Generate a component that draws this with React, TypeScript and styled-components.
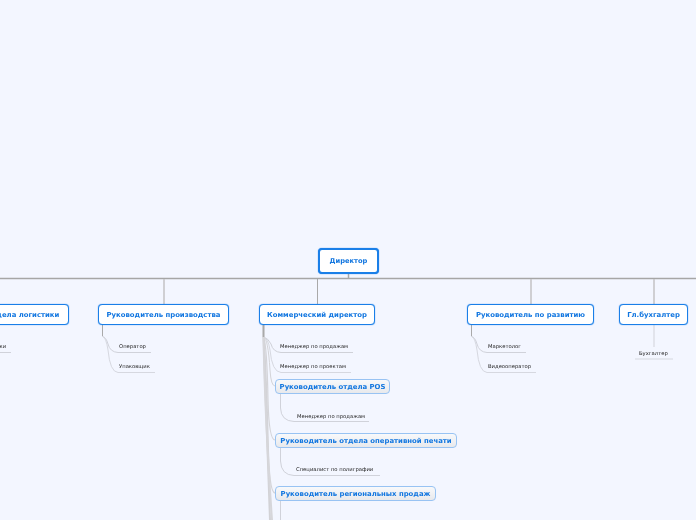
import React from 'react';
import styled, { createGlobalStyle } from 'styled-components';

const GlobalStyle = createGlobalStyle`
  html, body {
    margin: 0;
    padding: 0;
    background: #f3f6ff;
    overflow: hidden;
  }
`;

const Canvas = styled.div`
  position: relative;
  width: 696px;
  height: 520px;
  overflow: hidden;
  background: #f3f6ff;
  font-family: 'DejaVu Sans', Verdana, sans-serif;
  text-rendering: geometricPrecision;
  filter: blur(0.25px);
`;

const Wires = styled.svg`
  position: absolute;
  inset: 0;
`;

const MainNode = styled.div<{ $x: number; $y: number; $w: number; $h: number; $root?: boolean }>`
  position: absolute;
  left: ${(p) => p.$x}px;
  top: ${(p) => p.$y}px;
  width: ${(p) => p.$w}px;
  height: ${(p) => p.$h}px;
  box-sizing: border-box;
  display: flex;
  align-items: center;
  justify-content: center;
  background: #fff;
  border: ${(p) => (p.$root ? '2px' : '1px')} solid #1a7fe8;
  border-radius: 4px;
  box-shadow: 0 0 1px #1a7fe8;
  color: #1176e0;
  font-size: ${(p) => (p.$root ? 6.7 : 6.9)}px;
  font-weight: 700;
  white-space: nowrap;
`;

const SubNode = styled.div<{ $x: number; $y: number; $w: number }>`
  position: absolute;
  left: ${(p) => p.$x}px;
  top: ${(p) => p.$y}px;
  width: ${(p) => p.$w}px;
  height: 15px;
  box-sizing: border-box;
  display: flex;
  align-items: center;
  justify-content: center;
  background: linear-gradient(#f8f9fb, #e8e9ec);
  border: 1px solid #98c3f3;
  border-radius: 4px;
  color: #1176e0;
  font-size: 6.9px;
  font-weight: 700;
  white-space: nowrap;
`;

const Leaf = styled.div<{ $x: number; $y: number }>`
  position: absolute;
  left: ${(p) => p.$x}px;
  top: ${(p) => p.$y}px;
  color: #222;
  font-size: 5.25px;
  line-height: 8px;
  white-space: nowrap;
`;

const mainNodes = [
  { x: 318, y: 248, w: 61, h: 26, text: 'Директор', root: true },
  { x: -81, y: 304, w: 150, h: 21, text: 'Руководитель отдела логистики' },
  { x: 98, y: 304, w: 131, h: 21, text: 'Руководитель производства' },
  { x: 259, y: 304, w: 116, h: 21, text: 'Коммерческий директор' },
  { x: 467, y: 304, w: 127, h: 21, text: 'Руководитель по развитию' },
  { x: 619, y: 304, w: 69, h: 21, text: 'Гл.бухгалтер' },
];

const subNodes = [
  { x: 275, y: 379, w: 115, text: 'Руководитель отдела POS' },
  { x: 275, y: 433, w: 182, text: 'Руководитель отдела оперативной печати' },
  { x: 275, y: 486, w: 161, text: 'Руководитель региональных продаж' },
];

const leaves = [
  { x: -29, y: 342.5, text: 'Кладовщики' },
  { x: 119, y: 342.5, text: 'Оператор' },
  { x: 119, y: 362.5, text: 'Упаковщик' },
  { x: 280, y: 342.5, text: 'Менеджер по продажам' },
  { x: 280, y: 362.5, text: 'Менеджер по проектам' },
  { x: 297, y: 412.5, text: 'Менеджер по продажам' },
  { x: 296, y: 465.5, text: 'Специалист по полиграфии' },
  { x: 488, y: 342.5, text: 'Маркетолог' },
  { x: 488, y: 362.5, text: 'Видеооператор' },
  { x: 639, y: 349.5, text: 'Бухгалтер' },
];

// [path, stroke, width]
const wires: [string, string, number][] = [
  ['M0 278.5H696', '#a6a6a6', 1.5],
  ['M348.5 274V278', '#a9a9a9', 1.5],
  ['M317.5 279V304', '#a9a9a9', 1],
  ['M164 279V304', '#c6c6c8', 1.6],
  ['M531 279V304', '#c6c6c8', 1.6],
  ['M654 279V304', '#c6c6c8', 1.6],
  // Производство
  ['M102.5 325V336.5Q106 337 108 344Q110 352 118 352.5H151', '#d0d2da', 1],
  ['M102.5 325V336.5Q106 337 108 350Q110 372 118 372.5H155', '#d6d8e0', 1],
  ['M102.5 325V336', '#a9a9a9', 1],
  ['M-10 352.5H11', '#d0d2da', 1],
  // Коммерческий
  ['M263.5 325V337Q268 338 271 344Q273 352 281 352.5H353', '#cfd1d8', 1],
  ['M263.5 325V337Q268 338 270 350Q272 372 281 372.5H351', '#d6d8e0', 1],
  ['M263.5 325V337Q268 338 270 370Q271 386 275 386', '#d4d4d8', 1],
  ['M263.5 325V337Q267 345 268 400Q269 440 275 440', '#d4d4d8', 1.2],
  ['M263.5 325V337Q266 360 268 440Q269 493 275 493', '#d4d4d8', 1.5],
  ['M263.5 325V337Q266 400 270 520', '#d2d2d6', 2],
  ['M263.5 325V337Q265 420 272 520', '#d6d6da', 2],
  ['M263.5 325V337', '#a9a9a9', 1.5],
  ['M280.5 394V408Q281 421 294 421.5H369', '#d0d2da', 1],
  ['M280.5 448V461Q281 475 294 475.5H380', '#d0d2da', 1],
  ['M280.5 501V520', '#d0d2da', 1],
  // Развитие
  ['M471.5 325V336.5Q475 337 477 344Q479 352 487 352.5H526', '#d0d2da', 1],
  ['M471.5 325V336.5Q475 337 477 350Q479 372 487 372.5H536', '#d6d8e0', 1],
  ['M471.5 325V336', '#a9a9a9', 1],
  // Бухгалтер
  ['M654 325V347', '#dcdee6', 1.5],
  ['M635 359H673', '#d6d8e0', 1.2],
];

export default function App() {
  return (
    <Canvas>
      <GlobalStyle />
      <Wires width={696} height={520} viewBox="0 0 696 520" fill="none">
        {wires.map(([d, stroke, width]) => (
          <path key={d + stroke + width} d={d} stroke={stroke} strokeWidth={width} />
        ))}
      </Wires>
      {mainNodes.map((n) => (
        <MainNode key={n.text} $x={n.x} $y={n.y} $w={n.w} $h={n.h} $root={n.root}>
          {n.text}
        </MainNode>
      ))}
      {subNodes.map((n) => (
        <SubNode key={n.text} $x={n.x} $y={n.y} $w={n.w}>
          {n.text}
        </SubNode>
      ))}
      {leaves.map((l) => (
        <Leaf key={l.text + l.x} $x={l.x} $y={l.y}>
          {l.text}
        </Leaf>
      ))}
    </Canvas>
  );
}
